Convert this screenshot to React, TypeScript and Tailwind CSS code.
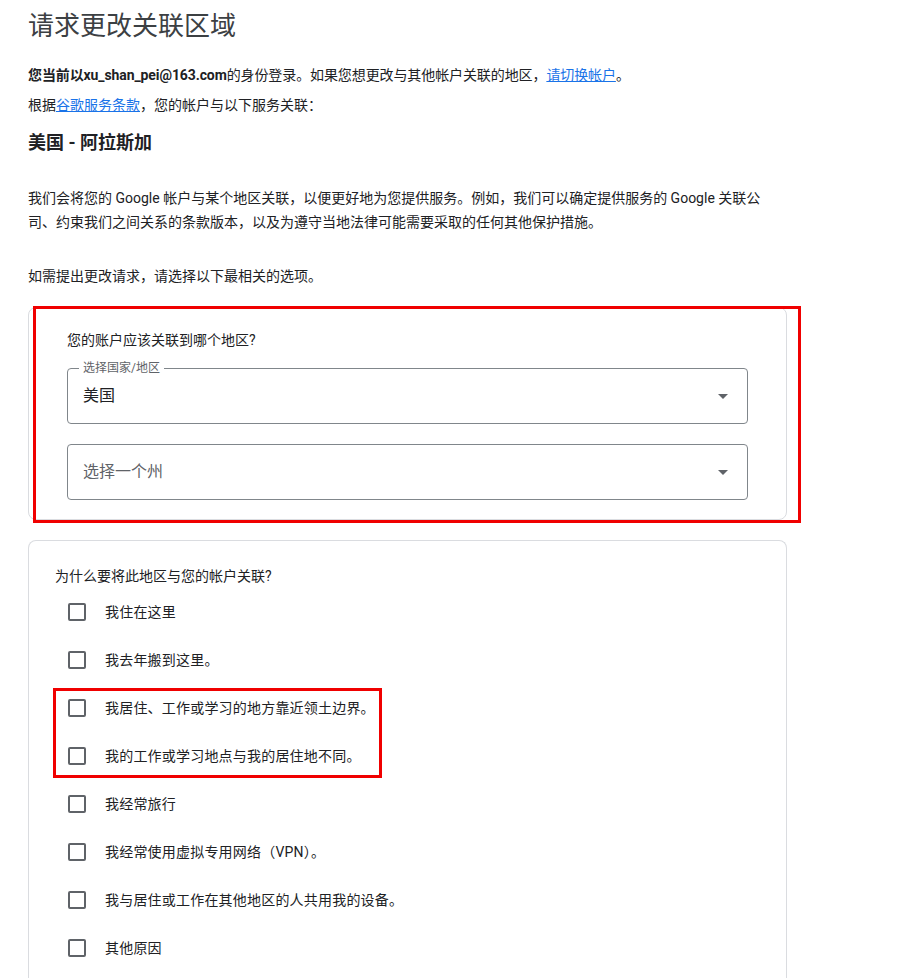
import React from "react";

const font = { fontFamily: "Roboto, 'Noto Sans CJK SC', 'Noto Sans', sans-serif" };

function Arrow() {
  return (
    <svg width="10" height="5" viewBox="0 0 10 5" className="shrink-0">
      <path d="M0 0 L10 0 L5 5 Z" fill="#5f6368" />
    </svg>
  );
}

const reasons = [
  "我住在这里",
  "我去年搬到这里。",
  "我居住、工作或学习的地方靠近领土边界。",
  "我的工作或学习地点与我的居住地不同。",
  "我经常旅行",
  "我经常使用虚拟专用网络（VPN）。",
  "我与居住或工作在其他地区的人共用我的设备。",
  "其他原因",
];

export default function App() {
  return (
    <div className="min-h-[978px] bg-white pl-[28px] text-[#202124]" style={font}>
      <h1 className="pt-[8px] text-[26px] leading-[36px] font-normal text-[#3c4043]">请求更改关联区域</h1>
      <p className="mt-[21px] text-[14px] leading-[20px] tracking-[-0.1px]">
        <span className="font-bold">您当前以xu_shan_pei@163.com</span>的身份登录。如果您想更改与其他帐户关联的地区，
        <a className="text-[#1a73e8] underline">请切换帐户</a>。
      </p>
      <p className="mt-[10px] text-[14px] leading-[20px]">
        根据<a className="text-[#1a73e8] underline">谷歌服务条款</a>，您的帐户与以下服务关联：
      </p>
      <p className="mt-[16px] text-[18px] leading-[24px] font-bold">美国 - 阿拉斯加</p>
      <p className="mt-[31px] max-w-[745px] text-[14px] leading-[24px]">
        我们会将您的 Google 帐户与某个地区关联，以便更好地为您提供服务。例如，我们可以确定提供服务的 Google 关联公司、约束我们之间关系的条款版本，以及为遵守当地法律可能需要采取的任何其他保护措施。
      </p>
      <p className="mt-[30px] text-[14px] leading-[24px]">如需提出更改请求，请选择以下最相关的选项。</p>

      <div className="relative mt-[19px] w-[759px] rounded-[8px] border border-[#dadce0] px-[38px] pt-[22px] pb-[19px]">
        <p className="text-[14px] leading-[20px]">您的账户应该关联到哪个地区?</p>
        <div className="relative mt-[18px] flex h-[56px] items-center justify-between rounded-[4px] border border-[#80868b] pl-[15px] pr-[19px]">
          <span className="absolute -top-[9px] left-[11px] bg-white px-[4px] text-[12px] leading-[16px] text-[#5f6368]">选择国家/地区</span>
          <span className="text-[16px] leading-[24px] text-[#202124]">美国</span>
          <Arrow />
        </div>
        <div className="mt-[20px] flex h-[56px] items-center justify-between rounded-[4px] border border-[#80868b] pl-[15px] pr-[19px]">
          <span className="text-[16px] leading-[24px] text-[#5f6368]">选择一个州</span>
          <Arrow />
        </div>
        <div className="pointer-events-none absolute left-[4px] top-[-2px] h-[217px] w-[768px] border-[3px] border-[#f00000]" />
      </div>

      <div className="relative mt-[20px] w-[759px] rounded-t-[8px] border border-b-0 border-[#dadce0] pl-[26px] pt-[25px] pb-[24px]">
        <p className="text-[14px] leading-[20px]">为什么要将此地区与您的帐户关联?</p>
        <div className="mt-[2px] flex flex-col">
          {reasons.map((r) => (
            <div key={r} className="flex h-[48px] items-center pl-[13px]">
              <span className="h-[18px] w-[18px] shrink-0 rounded-[2px] border-2 border-[#5f6368]" />
              <span className="ml-[19px] text-[14px] leading-[20px] tracking-[0.2px]">{r}</span>
            </div>
          ))}
        </div>
        <div className="pointer-events-none absolute left-[24px] top-[147px] h-[90px] w-[329px] border-[3px] border-[#f00000]" />
      </div>
    </div>
  );
}
